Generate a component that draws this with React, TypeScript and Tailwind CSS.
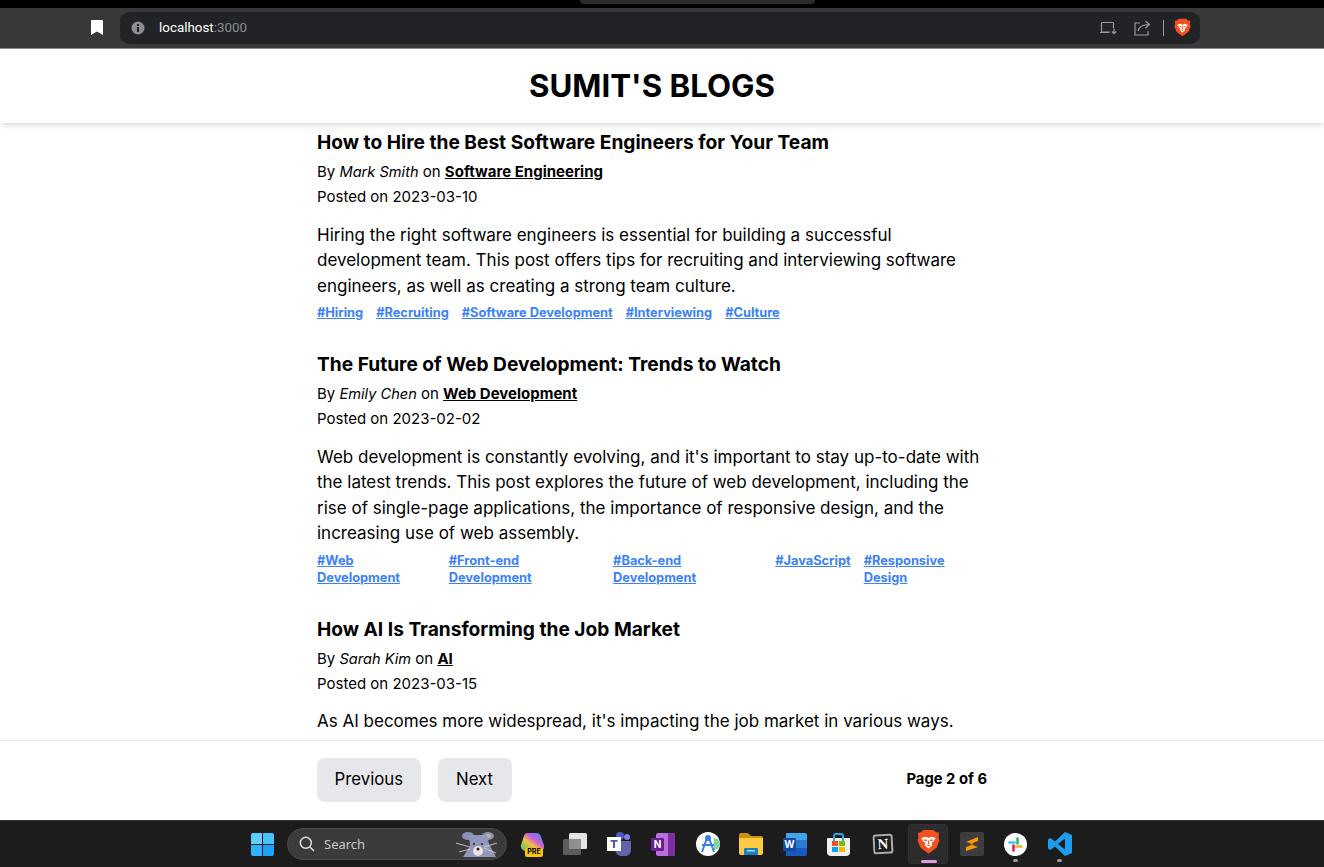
const posts = [
  {
    title: "How to Hire the Best Software Engineers for Your Team",
    author: "Mark Smith",
    category: "Software Engineering",
    date: "2023-03-10",
    body: "Hiring the right software engineers is essential for building a successful development team. This post offers tips for recruiting and interviewing software engineers, as well as creating a strong team culture.",
    tags: ["Hiring", "Recruiting", "Software Development", "Interviewing", "Culture"],
  },
  {
    title: "The Future of Web Development: Trends to Watch",
    author: "Emily Chen",
    category: "Web Development",
    date: "2023-02-02",
    body: "Web development is constantly evolving, and it's important to stay up-to-date with the latest trends. This post explores the future of web development, including the rise of single-page applications, the importance of responsive design, and the increasing use of web assembly.",
    tags: ["Web Development", "Front-end Development", "Back-end Development", "JavaScript", "Responsive Design"],
  },
  {
    title: "How AI Is Transforming the Job Market",
    author: "Sarah Kim",
    category: "AI",
    date: "2023-03-15",
    body: "As AI becomes more widespread, it's impacting the job market in various ways.",
    tags: [],
  },
]

const BraveIcon = ({ size }: { size: number }) => (
  <svg width={size} height={size * 1.12} viewBox="0 0 24 27">
    <path d="M7 1h10l3 2.500 3 .500-.5 5 1 3-3 7.500L12 26l-8.500-6.500-3-7.500 1-3L1 4l3-.5z" fill="#f4511e" />
    <path d="M4.500 9.500 9 8l3 1.500L15 8l4.500 1.500-2.500 4-2 1 1 2.500-4 3.500L8 17l1-2.500-2-1z" fill="#fff" />
    <path d="M7.500 11.500 10.500 12M16.500 11.500 13.500 12M12 12v4" stroke="#f4511e" strokeWidth="1.400" />
    <path d="M10 16.500h4l-2 1.800z" fill="#f4511e" />
  </svg>
)

function BrowserBar() {
  return (
    <div className="shrink-0">
      <div className="flex h-2 justify-center bg-black">
        <div className="ml-[71px] h-1 w-[235px] rounded-b-md bg-[#2b2b2b]" />
      </div>
      <div className="flex h-[41px] items-start border-b border-[#8a8a8a] bg-[#383838] pl-[91px] pt-1">
        <svg width="12" height="15" viewBox="0 0 12 15" className="mt-[8px]">
          <path d="M1 0h10a1 1 0 0 1 1 1v14l-6-3.500L0 15V1a1 1 0 0 1 1-1z" fill="#fff" />
        </svg>
        <div className="ml-[17px] flex h-8 w-[1080px] items-center rounded-[9px] bg-[#222327] pl-[11px] pr-[9px]">
          <svg width="14" height="14" viewBox="0 0 14 14">
            <circle cx="7" cy="7" r="6.500" fill="#8b8d91" />
            <path d="M6 6h2v5H6zM6 3h2v2H6z" fill="#222327" />
          </svg>
          <span className="ml-[14px] pt-px font-['Roboto',sans-serif] text-[13.400px] text-white">
            localhost<span className="text-[#8b8d91]">:3000</span>
          </span>
          <div className="ml-auto flex items-center">
            <svg width="17" height="14" viewBox="0 0 17 14" fill="none" stroke="#9a9b9e" strokeWidth="1.200">
              <path d="M10 11H2.500a1 1 0 0 1-1-1V2.500a1 1 0 0 1 1-1h10a1 1 0 0 1 1 1V7M0 11.500h9M14 7.500v5M11.800 10.500l2.200 2.200 2.200-2.200" />
            </svg>
            <svg width="17" height="16" viewBox="0 0 17 16" fill="none" stroke="#9a9b9e" strokeWidth="1.200" className="ml-[17px]">
              <path d="M6 3H1v12h13v-4M4 11c1-4 5-6.500 11-6.500M11.500 1 15.500 4.500 11.500 8" />
            </svg>
            <div className="ml-[12px] h-4 w-px bg-[#9a9b9e]" />
            <div className="ml-[10px] flex">
              <BraveIcon size={17} />
            </div>
          </div>
        </div>
      </div>
    </div>
  )
}

function PostItem({ post }: { post: (typeof posts)[number] }) {
  return (
    <article className="mb-[29px]">
      <h2 className="text-[19.150px] leading-[28px] font-bold">{post.title}</h2>
      <p className="mt-[4px] text-[15px] leading-[24px]">
        By <em className="text-[14.600px]">{post.author}</em> on{" "}
        <a className="font-bold underline">{post.category}</a>
      </p>
      <p className="mt-px text-[15px] leading-[24px]">Posted on {post.date}</p>
      <p className="mt-[13.500px] text-[17px] leading-[25.500px]">{post.body}</p>
      <div className="mt-[5px] flex gap-[13px]">
        {post.tags.map((tag) => (
          <a key={tag} className="text-[12.800px] leading-[17px] font-bold text-[#3b82f6] underline">
            #{tag}
          </a>
        ))}
      </div>
    </article>
  )
}

function Taskbar() {
  return (
    <div className="flex h-[47px] shrink-0 items-center border-t border-[#333] bg-[#1c1c1c] pl-[251px]">
      {/* windows */}
      <div className="grid h-[23px] w-[23px] grid-cols-2 gap-px">
        <div className="rounded-tl-[2px] bg-[#5fd0fb]" />
        <div className="rounded-tr-[2px] bg-[#46c3fa]" />
        <div className="rounded-bl-[2px] bg-[#2cb4fb]" />
        <div className="rounded-br-[2px] bg-[#1ba3f8]" />
      </div>
      {/* search */}
      <div className="relative ml-[13px] flex h-8 w-[220px] items-center rounded-full border border-[#4a4a4a] bg-[#3b3b3b] pl-[11px]">
        <svg width="16" height="16" viewBox="0 0 16 16" fill="none" stroke="#e2e2e2" strokeWidth="1.400">
          <circle cx="6.800" cy="6.800" r="5.500" />
          <path d="M11 11l4 4" />
        </svg>
        <span className="ml-[9px] pt-px font-['Noto_Sans',sans-serif] text-[13px] text-[#c8c8c8]">Search</span>
        <svg width="42" height="28" viewBox="0 0 42 28" className="absolute right-[8px] top-[1px]">
          <ellipse cx="12" cy="6" rx="6" ry="4" fill="#8b90b5" />
          <ellipse cx="32" cy="6" rx="6" ry="4" fill="#8b90b5" />
          <ellipse cx="32" cy="6" rx="3" ry="2" fill="#d0b090" />
          <path d="M13 5h18l2 9 7 13H7l7-11z" fill="#9196bb" />
          <path d="M0 13l14 4M3 22l11-3M41 13l-13 4M40 23l-12-5" stroke="#ddd" strokeWidth="0.800" />
          <ellipse cx="22" cy="21" rx="5" ry="5" fill="#e9e4e0" />
          <circle cx="22" cy="19" r="1.500" fill="#222" />
          <circle cx="18" cy="14" r="1" fill="#222" />
          <circle cx="26" cy="14" r="1" fill="#222" />
        </svg>
      </div>
      {/* copilot */}
      <div className="relative ml-[13px] h-[25px] w-[24px]">
        <svg width="24" height="20" viewBox="0 0 24 20">
          <defs>
            <linearGradient id="copilot" x1="0" x2="1" y1="1" y2="0">
              <stop offset="0" stopColor="#3fc56f" />
              <stop offset="0.400" stopColor="#f3c03c" />
              <stop offset="0.600" stopColor="#c860d8" />
              <stop offset="1" stopColor="#3a8ff0" />
            </linearGradient>
          </defs>
          <path d="M7 1h10c2 0 3 1 4 4l3 8c1 3-1 6-4 6H6c-3 0-6-3-5-6l3-9c.500-2 1.500-3 3-3z" fill="url(#copilot)" />
        </svg>
        <div className="absolute bottom-0 left-[5px] flex h-[9px] w-[18px] items-center justify-center rounded-[2px] bg-[#f9c513] text-[7px] font-bold text-black">
          PRE
        </div>
      </div>
      {/* task view */}
      <svg width="24" height="23" viewBox="0 0 24 23" className="ml-[19px]">
        <rect x="0" y="6" width="18" height="16" rx="1.500" fill="#5c5c5c" />
        <rect x="6" y="0" width="18" height="16" rx="1.500" fill="#e4e4e4" />
        <rect x="6" y="6" width="12" height="10" fill="#8f8f8f" />
      </svg>
      {/* teams */}
      <svg width="24" height="25" viewBox="0 0 24 25" className="ml-[20px]">
        <circle cx="20" cy="5" r="3" fill="#7b83eb" />
        <circle cx="13" cy="4" r="4" fill="#5059c9" />
        <path d="M8 9h16v8c0 4-2 7-5 7h-5c-3 0-6-3-6-7z" fill="#6264a7" />
        <rect x="0" y="5" width="14" height="14" fill="#fff" />
        <path d="M3.500 8h7v1.800H8V16H6V9.800H3.500z" fill="#4b53bc" />
      </svg>
      {/* onenote */}
      <div className="relative ml-[20px] flex h-[23px] w-[24px]">
        <div className="ml-[5px] h-full w-[19px] rounded-[2px] bg-[#ba6fdc]" />
        <div className="absolute right-0 top-0 h-full w-[7px] rounded-r-[2px] bg-[#7c2f9e]" />
        <div className="absolute left-0 top-[5px] flex h-[13px] w-[13px] items-center justify-center rounded-[1px] bg-[#6a1f8f] text-[10px] font-bold text-white">
          N
        </div>
      </div>
      {/* android studio */}
      <div className="relative ml-[21px] flex h-[24px] w-[24px] items-center justify-center rounded-full bg-white">
        <div className="absolute right-0 top-[6px] h-[12px] w-[6px] rounded-r-full bg-[#7fd69a]" />
        <svg width="18" height="20" viewBox="0 0 18 20" fill="none" stroke="#3b7de8" strokeWidth="2" className="relative">
          <path d="M9 1 3 18M9 1l6 17M3 11h12" />
          <circle cx="9" cy="4" r="2" fill="#3b7de8" />
        </svg>
      </div>
      {/* folder */}
      <svg width="24" height="22" viewBox="0 0 24 22" className="ml-[19px]">
        <path d="M0 2a2 2 0 0 1 2-2h7l3 3h10a2 2 0 0 1 2 2v3H0z" fill="#c9930f" />
        <path d="M0 5h24v15a2 2 0 0 1-2 2H2a2 2 0 0 1-2-2z" fill="#fdcb3f" />
        <rect x="5" y="15" width="14" height="7" rx="1" fill="#1b7fc4" />
        <rect x="8" y="17" width="8" height="1.500" fill="#a8d8f2" />
      </svg>
      {/* word */}
      <div className="relative ml-[20px] flex h-[23px] w-[24px] flex-col overflow-hidden rounded-[2px]">
        <div className="ml-[3px] flex-1 bg-[#41a5ee]" />
        <div className="ml-[3px] flex-1 bg-[#2b7cd3]" />
        <div className="ml-[3px] flex-1 bg-[#185abd]" />
        <div className="absolute left-0 top-[5px] flex h-[13px] w-[13px] items-center justify-center rounded-[1px] bg-[#124a9e] text-[10px] font-bold text-white">
          W
        </div>
      </div>
      {/* store */}
      <div className="relative ml-[20px] flex h-[23px] w-[23px] items-end">
        <div className="absolute left-[6px] top-0 h-[8px] w-[11px] rounded-t-[3px] border-2 border-b-0 border-[#2aa7e0]" />
        <div className="grid h-[18px] w-[23px] grid-cols-[6px_6px] content-center justify-center gap-px rounded-b-[4px] rounded-t-[1px] bg-[#f0f0f0]">
          <div className="h-[5px] bg-[#f25022]" />
          <div className="h-[5px] bg-[#7fba00]" />
          <div className="h-[5px] bg-[#00a4ef]" />
          <div className="h-[5px] bg-[#ffb900]" />
        </div>
      </div>
      {/* notion */}
      <div className="ml-[23px] flex h-[20px] w-[20px] -rotate-3 items-center justify-center rounded-[3px] border-2 border-[#aaa] bg-[#1c1c1c] font-['Liberation_Serif',serif] text-[15px] font-bold text-white">
        N
      </div>
      {/* brave (active) */}
      <div className="relative ml-[15px] flex h-10 w-10 items-center justify-center rounded-[4px] border border-[#333] bg-[#2c2c2c]">
        <div className="mb-[5px] flex">
          <BraveIcon size={23} />
        </div>
        <div className="absolute bottom-0 left-[12px] h-[3px] w-4 rounded-full bg-[#d8a0e0]" />
      </div>
      {/* sublime */}
      <div className="ml-[12px] flex h-6 w-6 items-center justify-center rounded-[2px] bg-[#3d3d3d]">
        <svg width="14" height="16" viewBox="0 0 14 16">
          <path d="M1 6 13 1v4L5 8l8 3-12 4v-4l8-3-8-2z" fill="#ff9800" />
        </svg>
      </div>
      {/* slack */}
      <div className="relative ml-[20px] flex h-[23px] w-[23px] items-center justify-center rounded-full bg-white">
        <svg width="15" height="15" viewBox="0 0 15 15" strokeWidth="2.600" strokeLinecap="round">
          <path d="M1.500 5.500h5" stroke="#36c5f0" />
          <path d="M9.500 1.500v5" stroke="#2eb67d" />
          <path d="M8.500 9.500h5" stroke="#ecb22e" />
          <path d="M5.500 8.500v5" stroke="#e01e5a" />
        </svg>
        <div className="absolute -bottom-[6px] left-[9px] h-[3px] w-[5px] rounded-full bg-[#9a9a9a]" />
      </div>
      {/* vs code */}
      <div className="relative ml-[21px] flex">
        <svg width="24" height="24" viewBox="0 0 24 24">
          <path d="M17 0 24 3v18l-7 3-10-9.500L2.500 18 0 16.500V7.500L2.500 6 7 9.500zM17 6.500 10 12l7 5.500z" fill="#1f9cf0" />
        </svg>
        <div className="absolute -bottom-[6px] left-[9px] h-[3px] w-[5px] rounded-full bg-[#9a9a9a]" />
      </div>
    </div>
  )
}

export default function App() {
  return (
    <div className="flex h-[867px] flex-col overflow-hidden bg-white font-['Inter',sans-serif] text-black">
      <BrowserBar />
      <header className="relative z-10 flex h-[74px] shrink-0 items-center justify-center bg-white pr-5 shadow-md">
        <h1 className="text-[31.250px] font-bold">SUMIT'S BLOGS</h1>
      </header>
      <main className="min-h-0 flex-1 overflow-hidden pr-5">
        <div className="mx-auto w-[670px] pt-[5px]">
          {posts.map((post) => (
            <PostItem key={post.title} post={post} />
          ))}
        </div>
      </main>
      <footer className="h-[80px] shrink-0 border-t border-[#e5e7eb] bg-white pr-5">
        <div className="mx-auto flex h-full w-[670px] items-center pb-px">
          <button className="h-11 rounded-lg bg-[#e5e7eb] px-[17.500px] text-[16.800px]">Previous</button>
          <button className="ml-[17px] h-11 rounded-lg bg-[#e5e7eb] px-[18.500px] text-[16.800px]">Next</button>
          <span className="mb-px ml-auto text-[14.800px] font-bold">Page 2 of 6</span>
        </div>
      </footer>
      <Taskbar />
    </div>
  )
}
